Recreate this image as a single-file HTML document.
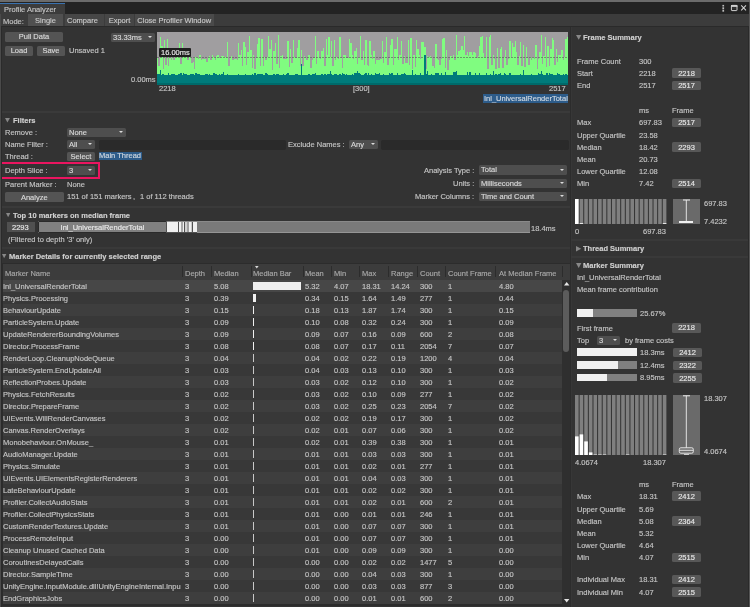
<!DOCTYPE html><html><head><meta charset='utf-8'><style>
*{margin:0;padding:0}
html,body{width:750px;height:607px;overflow:hidden;background:#333333}
body{position:relative;font-family:"Liberation Sans",sans-serif;font-size:7.5px;color:#c4c4c4;-webkit-text-stroke:0.15px currentColor}
.t{position:absolute;white-space:nowrap;line-height:10px;height:10px;will-change:transform}
.b{position:absolute;box-sizing:border-box}
.bold{font-weight:bold;color:#d0d0d0}
.wt{color:#e8e8e8}
.hl{color:#d0d8e0}
.hd{color:#a8a8a8}
.rw{color:#c4c4c4}
.btn,.fb,.tb{background:#545454;border-radius:1.5px;text-align:center;color:#d8d8d8}
.btn span,.fb span,.tb span{position:absolute;left:0;right:0;top:50%;line-height:10px;margin-top:-4.4px;will-change:transform}
.tb span{margin-top:-4px}
.tb.lft span{text-align:left;left:1.5px}
.tb{border-radius:0;background:#464646;color:#c8c8c8}
.tb.sel{background:#505050}
.tb.cl{background:#4a4a4a}
.fb{background:#585858;color:#e6e6e6}
.dd{background:#4e4e4e;border-radius:1.5px;color:#d8d8d8}
.dd span{position:absolute;left:2px;top:50%;line-height:10px;margin-top:-4.6px;will-change:transform}
.dd i{position:absolute;right:2.8px;top:50%;margin-top:-1.2px;width:0;height:0;border-left:2.2px solid transparent;border-right:2.2px solid transparent;border-top:2.8px solid #dcdcdc}
.tf{background:#2a2a2a;border-radius:2px}
.tri{position:absolute;width:0;height:0;border-left:2.5px solid transparent;border-right:2.5px solid transparent;border-top:4.6px solid #888}
.trir{position:absolute;width:0;height:0;border-top:2.5px solid transparent;border-bottom:2.5px solid transparent;border-left:4.6px solid #888}
.sorti{position:absolute;width:0;height:0;border-left:2px solid transparent;border-right:2px solid transparent;border-top:2.6px solid #d0d0d0}
.up{position:absolute;width:0;height:0;border-left:2.8px solid transparent;border-right:2.8px solid transparent;border-bottom:3.4px solid #e0e0e0}
.down{position:absolute;width:0;height:0;border-left:2.8px solid transparent;border-right:2.8px solid transparent;border-top:3.4px solid #e0e0e0}
</style></head><body><div class="b " style="left:0px;top:0px;width:750px;height:2px;background:#6b6b6b"></div>
<div class="b " style="left:0px;top:2px;width:750px;height:12px;background:#232323"></div>
<div class="b " style="left:0px;top:3px;width:65px;height:11px;background:#3c3c3c"></div>
<div class="b " style="left:0px;top:3px;width:65px;height:1px;background:#3a72b0"></div>
<div class="t " style="left:4px;top:5.10px;">Profile Analyzer</div>
<svg class="b" style="left:718px;top:3px" width="32" height="11" viewBox="0 0 32 11"><rect x="4.4" y="1.9" width="1.7" height="1.6" fill="#bdbdbd"/><rect x="4.4" y="4.3" width="1.7" height="2" fill="#bdbdbd"/><rect x="4.4" y="6.9" width="1.7" height="1.8" fill="#bdbdbd"/><rect x="13.4" y="2.4" width="5.6" height="5.2" rx="0.6" fill="#262626" stroke="#d0d0d0" stroke-width="1"/><rect x="13" y="2" width="6.4" height="1.9" fill="#d0d0d0"/><rect x="14.2" y="4.8" width="4" height="0.5" fill="#555"/><path d="M23.2 2.4 L28 7.3 M28 2.4 L23.2 7.3" stroke="#d4d4d4" stroke-width="1.05"/></svg>
<div class="b " style="left:0px;top:14px;width:750px;height:12px;background:#3c3c3c"></div>
<div class="b " style="left:0px;top:26px;width:750px;height:1px;background:#2a2a2a"></div>
<div class="t " style="left:3px;top:16.60px;">Mode:</div>
<div class="b tb sel" style="left:28px;top:14px;width:35px;height:12px;"><span>Single</span></div>
<div class="b tb lft" style="left:65px;top:14px;width:39px;height:12px;"><span>Compare</span></div>
<div class="b tb" style="left:105px;top:14px;width:29px;height:12px;"><span>Export</span></div>
<div class="b tb cl" style="left:135px;top:14px;width:78.5px;height:12px;"><span>Close Profiler Window</span></div>
<div class="b btn" style="left:5px;top:32px;width:58px;height:9.700000000000003px;"><span>Pull Data</span></div>
<div class="b btn" style="left:5px;top:46px;width:28px;height:9.600000000000001px;"><span>Load</span></div>
<div class="b btn" style="left:37px;top:46px;width:28px;height:9.600000000000001px;"><span>Save</span></div>
<div class="t " style="left:69px;top:46.10px;">Unsaved 1</div>
<div class="b dd" style="left:111px;top:33px;width:44px;height:9px;"><span>33.33ms</span><i></i></div>
<svg class="b" style="left:157px;top:32px" width="411.00" height="53.00" viewBox="0 0 411.00 53.00" shape-rendering="crispEdges"><rect width="411.00" height="53.00" fill="#a09ea0"/><path d="M0.00 26.41h1.42V53h-1.42ZM1.37 34.06h1.42V53h-1.42ZM2.74 4.54h1.42V53h-1.42ZM4.11 13.67h1.42V53h-1.42ZM5.48 36.87h1.42V53h-1.42ZM6.85 8.24h1.42V53h-1.42ZM8.22 32.98h1.42V53h-1.42ZM9.59 6.50h1.42V53h-1.42ZM10.96 33.63h1.42V53h-1.42ZM12.33 25.95h1.42V53h-1.42ZM13.70 28.38h1.42V53h-1.42ZM15.07 25.43h1.42V53h-1.42ZM16.44 27.75h1.42V53h-1.42ZM17.81 25.24h1.42V53h-1.42ZM19.18 22.86h1.42V53h-1.42ZM20.55 24.21h1.42V53h-1.42ZM21.92 10.85h1.42V53h-1.42ZM23.29 31.98h1.42V53h-1.42ZM24.66 10.64h1.42V53h-1.42ZM26.03 24.99h1.42V53h-1.42ZM27.40 23.56h1.42V53h-1.42ZM28.77 24.08h1.42V53h-1.42ZM30.14 28.22h1.42V53h-1.42ZM31.51 22.82h1.42V53h-1.42ZM32.88 24.85h1.42V53h-1.42ZM34.25 30.54h1.42V53h-1.42ZM35.62 30.00h1.42V53h-1.42ZM36.99 36.99h1.42V53h-1.42ZM38.36 24.68h1.42V53h-1.42ZM39.73 25.40h1.42V53h-1.42ZM41.10 27.47h1.42V53h-1.42ZM42.47 23.38h1.42V53h-1.42ZM43.84 27.68h1.42V53h-1.42ZM45.21 27.13h1.42V53h-1.42ZM46.58 27.37h1.42V53h-1.42ZM47.95 26.94h1.42V53h-1.42ZM49.32 30.22h1.42V53h-1.42ZM50.69 25.18h1.42V53h-1.42ZM52.06 23.82h1.42V53h-1.42ZM53.43 27.90h1.42V53h-1.42ZM54.80 23.01h1.42V53h-1.42ZM56.17 25.37h1.42V53h-1.42ZM57.54 28.33h1.42V53h-1.42ZM58.91 23.52h1.42V53h-1.42ZM60.28 23.38h1.42V53h-1.42ZM61.65 25.79h1.42V53h-1.42ZM63.02 25.66h1.42V53h-1.42ZM64.39 23.77h1.42V53h-1.42ZM65.76 24.06h1.42V53h-1.42ZM67.13 25.25h1.42V53h-1.42ZM68.50 25.51h1.42V53h-1.42ZM69.87 10.48h1.42V53h-1.42ZM71.24 33.79h1.42V53h-1.42ZM72.61 25.83h1.42V53h-1.42ZM73.98 24.16h1.42V53h-1.42ZM75.35 27.97h1.42V53h-1.42ZM76.72 26.66h1.42V53h-1.42ZM78.09 26.70h1.42V53h-1.42ZM79.46 28.16h1.42V53h-1.42ZM80.83 10.52h1.42V53h-1.42ZM82.20 23.43h1.42V53h-1.42ZM83.57 18.01h1.42V53h-1.42ZM84.94 33.90h1.42V53h-1.42ZM86.31 10.34h1.42V53h-1.42ZM87.68 15.28h1.42V53h-1.42ZM89.05 32.65h1.42V53h-1.42ZM90.42 19.75h1.42V53h-1.42ZM91.79 3.67h1.42V53h-1.42ZM93.16 18.49h1.42V53h-1.42ZM94.53 35.60h1.42V53h-1.42ZM95.90 22.93h1.42V53h-1.42ZM97.27 36.85h1.42V53h-1.42ZM98.64 25.82h1.42V53h-1.42ZM100.01 11.96h1.42V53h-1.42ZM101.38 6.43h1.42V53h-1.42ZM102.75 34.00h1.42V53h-1.42ZM104.12 7.26h1.42V53h-1.42ZM105.49 33.80h1.42V53h-1.42ZM106.86 25.47h1.42V53h-1.42ZM108.23 28.39h1.42V53h-1.42ZM109.60 24.93h1.42V53h-1.42ZM110.97 4.20h1.42V53h-1.42ZM112.34 17.30h1.42V53h-1.42ZM113.71 7.98h1.42V53h-1.42ZM115.08 37.69h1.42V53h-1.42ZM116.45 19.42h1.42V53h-1.42ZM117.82 11.07h1.42V53h-1.42ZM119.19 32.11h1.42V53h-1.42ZM120.56 3.38h1.42V53h-1.42ZM121.93 36.00h1.42V53h-1.42ZM123.30 24.46h1.42V53h-1.42ZM124.67 22.76h1.42V53h-1.42ZM126.04 27.37h1.42V53h-1.42ZM127.41 27.33h1.42V53h-1.42ZM128.78 26.66h1.42V53h-1.42ZM130.15 9.13h1.42V53h-1.42ZM131.52 35.01h1.42V53h-1.42ZM132.89 16.56h1.42V53h-1.42ZM134.26 30.53h1.42V53h-1.42ZM135.63 7.51h1.42V53h-1.42ZM137.00 24.80h1.42V53h-1.42ZM138.37 26.36h1.42V53h-1.42ZM139.74 15.63h1.42V53h-1.42ZM141.11 7.57h1.42V53h-1.42ZM142.48 34.13h1.42V53h-1.42ZM143.85 18.19h1.42V53h-1.42ZM145.22 33.67h1.42V53h-1.42ZM146.59 23.76h1.42V53h-1.42ZM147.96 25.64h1.42V53h-1.42ZM149.33 27.82h1.42V53h-1.42ZM150.70 22.65h1.42V53h-1.42ZM152.07 23.34h1.42V53h-1.42ZM153.44 36.01h1.42V53h-1.42ZM154.81 27.91h1.42V53h-1.42ZM156.18 26.04h1.42V53h-1.42ZM157.55 3.82h1.42V53h-1.42ZM158.92 32.13h1.42V53h-1.42ZM160.29 19.25h1.42V53h-1.42ZM161.66 25.80h1.42V53h-1.42ZM163.03 27.02h1.42V53h-1.42ZM164.40 18.76h1.42V53h-1.42ZM165.77 15.56h1.42V53h-1.42ZM167.14 34.46h1.42V53h-1.42ZM168.51 6.53h1.42V53h-1.42ZM169.88 23.34h1.42V53h-1.42ZM171.25 4.55h1.42V53h-1.42ZM172.62 24.98h1.42V53h-1.42ZM173.99 8.75h1.42V53h-1.42ZM175.36 34.03h1.42V53h-1.42ZM176.73 7.61h1.42V53h-1.42ZM178.10 27.74h1.42V53h-1.42ZM179.47 25.34h1.42V53h-1.42ZM180.84 27.45h1.42V53h-1.42ZM182.21 4.85h1.42V53h-1.42ZM183.58 26.38h1.42V53h-1.42ZM184.95 36.26h1.42V53h-1.42ZM186.32 23.27h1.42V53h-1.42ZM187.69 22.92h1.42V53h-1.42ZM189.06 26.11h1.42V53h-1.42ZM190.43 26.37h1.42V53h-1.42ZM191.80 7.20h1.42V53h-1.42ZM193.17 11.47h1.42V53h-1.42ZM194.54 22.70h1.42V53h-1.42ZM195.91 27.28h1.42V53h-1.42ZM197.28 19.49h1.42V53h-1.42ZM198.65 15.93h1.42V53h-1.42ZM200.02 31.79h1.42V53h-1.42ZM201.39 24.86h1.42V53h-1.42ZM202.76 3.88h1.42V53h-1.42ZM204.13 28.49h1.42V53h-1.42ZM205.50 18.91h1.42V53h-1.42ZM206.87 32.99h1.42V53h-1.42ZM208.24 7.76h1.42V53h-1.42ZM209.61 32.85h1.42V53h-1.42ZM210.98 33.79h1.42V53h-1.42ZM212.35 9.19h1.42V53h-1.42ZM213.72 22.74h1.42V53h-1.42ZM215.09 26.98h1.42V53h-1.42ZM216.46 19.28h1.42V53h-1.42ZM217.83 32.21h1.42V53h-1.42ZM219.20 28.16h1.42V53h-1.42ZM220.57 28.22h1.42V53h-1.42ZM221.94 28.07h1.42V53h-1.42ZM223.31 27.14h1.42V53h-1.42ZM224.68 9.15h1.42V53h-1.42ZM226.05 30.52h1.42V53h-1.42ZM227.42 19.66h1.42V53h-1.42ZM228.79 4.64h1.42V53h-1.42ZM230.16 33.33h1.42V53h-1.42ZM231.53 26.49h1.42V53h-1.42ZM232.90 12.64h1.42V53h-1.42ZM234.27 7.17h1.42V53h-1.42ZM235.64 33.17h1.42V53h-1.42ZM237.01 16.74h1.42V53h-1.42ZM238.38 16.92h1.42V53h-1.42ZM239.75 5.03h1.42V53h-1.42ZM241.12 27.70h1.42V53h-1.42ZM242.49 23.13h1.42V53h-1.42ZM243.86 9.27h1.42V53h-1.42ZM245.23 31.63h1.42V53h-1.42ZM246.60 24.37h1.42V53h-1.42ZM247.97 30.81h1.42V53h-1.42ZM249.34 31.31h1.42V53h-1.42ZM250.71 8.23h1.42V53h-1.42ZM252.08 33.33h1.42V53h-1.42ZM253.45 6.35h1.42V53h-1.42ZM254.82 36.56h1.42V53h-1.42ZM256.19 22.59h1.42V53h-1.42ZM257.56 34.98h1.42V53h-1.42ZM258.93 7.82h1.42V53h-1.42ZM260.30 16.68h1.42V53h-1.42ZM261.67 22.82h1.42V53h-1.42ZM263.04 27.45h1.42V53h-1.42ZM264.41 9.88h1.42V53h-1.42ZM265.78 9.80h1.42V53h-1.42ZM267.15 15.32h1.42V53h-1.42ZM268.52 36.71h1.42V53h-1.42ZM269.89 24.34h1.42V53h-1.42ZM271.26 25.18h1.42V53h-1.42ZM272.63 23.91h1.42V53h-1.42ZM274.00 25.34h1.42V53h-1.42ZM275.37 33.54h1.42V53h-1.42ZM276.74 35.87h1.42V53h-1.42ZM278.11 11.57h1.42V53h-1.42ZM279.48 27.39h1.42V53h-1.42ZM280.85 28.00h1.42V53h-1.42ZM282.22 32.81h1.42V53h-1.42ZM283.59 27.39h1.42V53h-1.42ZM284.96 7.47h1.42V53h-1.42ZM286.33 5.74h1.42V53h-1.42ZM287.70 36.28h1.42V53h-1.42ZM289.07 17.84h1.42V53h-1.42ZM290.44 37.94h1.42V53h-1.42ZM291.81 28.44h1.42V53h-1.42ZM293.18 23.56h1.42V53h-1.42ZM294.55 26.34h1.42V53h-1.42ZM295.92 22.51h1.42V53h-1.42ZM297.29 27.87h1.42V53h-1.42ZM298.66 3.04h1.42V53h-1.42ZM300.03 22.99h1.42V53h-1.42ZM301.40 18.77h1.42V53h-1.42ZM302.77 18.09h1.42V53h-1.42ZM304.14 13.98h1.42V53h-1.42ZM305.51 18.35h1.42V53h-1.42ZM306.88 3.99h1.42V53h-1.42ZM308.25 22.86h1.42V53h-1.42ZM309.62 20.40h1.42V53h-1.42ZM310.99 23.96h1.42V53h-1.42ZM312.36 19.86h1.42V53h-1.42ZM313.73 20.13h1.42V53h-1.42ZM315.10 23.14h1.42V53h-1.42ZM316.47 19.89h1.42V53h-1.42ZM317.84 20.63h1.42V53h-1.42ZM319.21 25.83h1.42V53h-1.42ZM320.58 23.80h1.42V53h-1.42ZM321.95 13.58h1.42V53h-1.42ZM323.32 4.81h1.42V53h-1.42ZM324.69 3.71h1.42V53h-1.42ZM326.06 20.91h1.42V53h-1.42ZM327.43 25.32h1.42V53h-1.42ZM328.80 4.90h1.42V53h-1.42ZM330.17 36.60h1.42V53h-1.42ZM331.54 4.66h1.42V53h-1.42ZM332.91 3.36h1.42V53h-1.42ZM334.28 32.57h1.42V53h-1.42ZM335.65 22.69h1.42V53h-1.42ZM337.02 26.73h1.42V53h-1.42ZM338.39 36.56h1.42V53h-1.42ZM339.76 15.96h1.42V53h-1.42ZM341.13 36.37h1.42V53h-1.42ZM342.50 17.14h1.42V53h-1.42ZM343.87 14.89h1.42V53h-1.42ZM345.24 36.30h1.42V53h-1.42ZM346.61 24.91h1.42V53h-1.42ZM347.98 18.10h1.42V53h-1.42ZM349.35 33.03h1.42V53h-1.42ZM350.72 27.03h1.42V53h-1.42ZM352.09 8.55h1.42V53h-1.42ZM353.46 25.13h1.42V53h-1.42ZM354.83 10.85h1.42V53h-1.42ZM356.20 14.95h1.42V53h-1.42ZM357.57 8.55h1.42V53h-1.42ZM358.94 19.58h1.42V53h-1.42ZM360.31 33.07h1.42V53h-1.42ZM361.68 23.68h1.42V53h-1.42ZM363.05 9.60h1.42V53h-1.42ZM364.42 34.00h1.42V53h-1.42ZM365.79 13.26h1.42V53h-1.42ZM367.16 34.59h1.42V53h-1.42ZM368.53 15.28h1.42V53h-1.42ZM369.90 26.35h1.42V53h-1.42ZM371.27 33.36h1.42V53h-1.42ZM372.64 25.04h1.42V53h-1.42ZM374.01 28.08h1.42V53h-1.42ZM375.38 25.44h1.42V53h-1.42ZM376.75 27.19h1.42V53h-1.42ZM378.12 12.77h1.42V53h-1.42ZM379.49 36.63h1.42V53h-1.42ZM380.86 26.61h1.42V53h-1.42ZM382.23 19.74h1.42V53h-1.42ZM383.60 3.23h1.42V53h-1.42ZM384.97 32.12h1.42V53h-1.42ZM386.34 23.81h1.42V53h-1.42ZM387.71 5.20h1.42V53h-1.42ZM389.08 34.50h1.42V53h-1.42ZM390.45 13.86h1.42V53h-1.42ZM391.82 34.39h1.42V53h-1.42ZM393.19 17.46h1.42V53h-1.42ZM394.56 6.16h1.42V53h-1.42ZM395.93 8.13h1.42V53h-1.42ZM397.30 32.90h1.42V53h-1.42ZM398.67 17.07h1.42V53h-1.42ZM400.04 30.12h1.42V53h-1.42ZM401.41 23.11h1.42V53h-1.42ZM402.78 23.42h1.42V53h-1.42ZM404.15 18.15h1.42V53h-1.42ZM405.52 27.53h1.42V53h-1.42ZM406.89 25.13h1.42V53h-1.42ZM408.26 6.98h1.42V53h-1.42ZM409.63 5.46h1.42V53h-1.42Z" fill="#80fc80"/><line x1="0" y1="25.299999999999997" x2="411.00" y2="25.299999999999997" stroke="#5a5a5a" stroke-width="0.6" stroke-dasharray="2 1"/><path d="M0.00 41.76h1.42V53h-1.42ZM1.37 41.88h1.42V53h-1.42ZM2.74 38.13h1.42V53h-1.42ZM4.11 43.03h1.42V53h-1.42ZM5.48 42.23h1.42V53h-1.42ZM6.85 43.15h1.42V53h-1.42ZM8.22 43.18h1.42V53h-1.42ZM9.59 43.07h1.42V53h-1.42ZM10.96 41.45h1.42V53h-1.42ZM12.33 42.94h1.42V53h-1.42ZM13.70 41.90h1.42V53h-1.42ZM15.07 41.60h1.42V53h-1.42ZM16.44 41.57h1.42V53h-1.42ZM17.81 42.92h1.42V53h-1.42ZM19.18 43.01h1.42V53h-1.42ZM20.55 41.60h1.42V53h-1.42ZM21.92 42.26h1.42V53h-1.42ZM23.29 41.35h1.42V53h-1.42ZM24.66 42.93h1.42V53h-1.42ZM26.03 41.34h1.42V53h-1.42ZM27.40 42.12h1.42V53h-1.42ZM28.77 41.90h1.42V53h-1.42ZM30.14 43.05h1.42V53h-1.42ZM31.51 42.97h1.42V53h-1.42ZM32.88 42.28h1.42V53h-1.42ZM34.25 42.21h1.42V53h-1.42ZM35.62 42.28h1.42V53h-1.42ZM36.99 43.16h1.42V53h-1.42ZM38.36 41.38h1.42V53h-1.42ZM39.73 42.28h1.42V53h-1.42ZM41.10 42.37h1.42V53h-1.42ZM42.47 43.19h1.42V53h-1.42ZM43.84 43.12h1.42V53h-1.42ZM45.21 42.97h1.42V53h-1.42ZM46.58 42.94h1.42V53h-1.42ZM47.95 41.78h1.42V53h-1.42ZM49.32 42.09h1.42V53h-1.42ZM50.69 42.90h1.42V53h-1.42ZM52.06 42.16h1.42V53h-1.42ZM53.43 43.06h1.42V53h-1.42ZM54.80 42.93h1.42V53h-1.42ZM56.17 41.45h1.42V53h-1.42ZM57.54 41.92h1.42V53h-1.42ZM58.91 42.22h1.42V53h-1.42ZM60.28 42.91h1.42V53h-1.42ZM61.65 42.38h1.42V53h-1.42ZM63.02 43.07h1.42V53h-1.42ZM64.39 42.05h1.42V53h-1.42ZM65.76 39.87h1.42V53h-1.42ZM67.13 42.93h1.42V53h-1.42ZM68.50 43.04h1.42V53h-1.42ZM69.87 42.40h1.42V53h-1.42ZM71.24 43.03h1.42V53h-1.42ZM72.61 43.17h1.42V53h-1.42ZM73.98 43.05h1.42V53h-1.42ZM75.35 43.02h1.42V53h-1.42ZM76.72 43.04h1.42V53h-1.42ZM78.09 42.92h1.42V53h-1.42ZM79.46 43.16h1.42V53h-1.42ZM80.83 42.11h1.42V53h-1.42ZM82.20 43.00h1.42V53h-1.42ZM83.57 43.13h1.42V53h-1.42ZM84.94 42.95h1.42V53h-1.42ZM86.31 43.10h1.42V53h-1.42ZM87.68 41.74h1.42V53h-1.42ZM89.05 43.05h1.42V53h-1.42ZM90.42 42.91h1.42V53h-1.42ZM91.79 43.12h1.42V53h-1.42ZM93.16 43.12h1.42V53h-1.42ZM94.53 42.33h1.42V53h-1.42ZM95.90 43.01h1.42V53h-1.42ZM97.27 41.36h1.42V53h-1.42ZM98.64 43.12h1.42V53h-1.42ZM100.01 42.27h1.42V53h-1.42ZM101.38 42.03h1.42V53h-1.42ZM102.75 41.98h1.42V53h-1.42ZM104.12 41.52h1.42V53h-1.42ZM105.49 43.17h1.42V53h-1.42ZM106.86 43.08h1.42V53h-1.42ZM108.23 41.40h1.42V53h-1.42ZM109.60 42.33h1.42V53h-1.42ZM110.97 43.12h1.42V53h-1.42ZM112.34 43.00h1.42V53h-1.42ZM113.71 43.15h1.42V53h-1.42ZM115.08 43.04h1.42V53h-1.42ZM116.45 41.97h1.42V53h-1.42ZM117.82 43.14h1.42V53h-1.42ZM119.19 41.92h1.42V53h-1.42ZM120.56 42.12h1.42V53h-1.42ZM121.93 42.99h1.42V53h-1.42ZM123.30 43.16h1.42V53h-1.42ZM124.67 42.93h1.42V53h-1.42ZM126.04 41.77h1.42V53h-1.42ZM127.41 43.02h1.42V53h-1.42ZM128.78 42.36h1.42V53h-1.42ZM130.15 41.40h1.42V53h-1.42ZM131.52 43.05h1.42V53h-1.42ZM132.89 43.05h1.42V53h-1.42ZM134.26 43.12h1.42V53h-1.42ZM135.63 43.14h1.42V53h-1.42ZM137.00 42.99h1.42V53h-1.42ZM138.37 42.22h1.42V53h-1.42ZM139.74 41.72h1.42V53h-1.42ZM141.11 42.99h1.42V53h-1.42ZM142.48 43.06h1.42V53h-1.42ZM143.85 32.00h1.42V53h-1.42ZM145.22 42.91h1.42V53h-1.42ZM146.59 43.14h1.42V53h-1.42ZM147.96 43.16h1.42V53h-1.42ZM149.33 43.13h1.42V53h-1.42ZM150.70 41.81h1.42V53h-1.42ZM152.07 42.02h1.42V53h-1.42ZM153.44 43.16h1.42V53h-1.42ZM154.81 41.95h1.42V53h-1.42ZM156.18 41.89h1.42V53h-1.42ZM157.55 41.40h1.42V53h-1.42ZM158.92 43.14h1.42V53h-1.42ZM160.29 42.96h1.42V53h-1.42ZM161.66 43.19h1.42V53h-1.42ZM163.03 43.11h1.42V53h-1.42ZM164.40 41.83h1.42V53h-1.42ZM165.77 43.12h1.42V53h-1.42ZM167.14 42.20h1.42V53h-1.42ZM168.51 43.05h1.42V53h-1.42ZM169.88 42.29h1.42V53h-1.42ZM171.25 42.09h1.42V53h-1.42ZM172.62 38.89h1.42V53h-1.42ZM173.99 42.07h1.42V53h-1.42ZM175.36 42.94h1.42V53h-1.42ZM176.73 41.92h1.42V53h-1.42ZM178.10 42.36h1.42V53h-1.42ZM179.47 43.20h1.42V53h-1.42ZM180.84 42.91h1.42V53h-1.42ZM182.21 41.77h1.42V53h-1.42ZM183.58 43.06h1.42V53h-1.42ZM184.95 41.30h1.42V53h-1.42ZM186.32 41.64h1.42V53h-1.42ZM187.69 43.03h1.42V53h-1.42ZM189.06 42.04h1.42V53h-1.42ZM190.43 43.06h1.42V53h-1.42ZM191.80 42.99h1.42V53h-1.42ZM193.17 43.07h1.42V53h-1.42ZM194.54 41.90h1.42V53h-1.42ZM195.91 43.05h1.42V53h-1.42ZM197.28 41.42h1.42V53h-1.42ZM198.65 41.26h1.42V53h-1.42ZM200.02 38.54h1.42V53h-1.42ZM201.39 41.23h1.42V53h-1.42ZM202.76 41.93h1.42V53h-1.42ZM204.13 43.10h1.42V53h-1.42ZM205.50 43.19h1.42V53h-1.42ZM206.87 42.20h1.42V53h-1.42ZM208.24 41.25h1.42V53h-1.42ZM209.61 42.95h1.42V53h-1.42ZM210.98 41.30h1.42V53h-1.42ZM212.35 43.19h1.42V53h-1.42ZM213.72 42.32h1.42V53h-1.42ZM215.09 43.10h1.42V53h-1.42ZM216.46 43.12h1.42V53h-1.42ZM217.83 41.49h1.42V53h-1.42ZM219.20 42.12h1.42V53h-1.42ZM220.57 42.10h1.42V53h-1.42ZM221.94 41.44h1.42V53h-1.42ZM223.31 43.10h1.42V53h-1.42ZM224.68 43.18h1.42V53h-1.42ZM226.05 41.74h1.42V53h-1.42ZM227.42 42.90h1.42V53h-1.42ZM228.79 42.99h1.42V53h-1.42ZM230.16 43.00h1.42V53h-1.42ZM231.53 41.39h1.42V53h-1.42ZM232.90 41.51h1.42V53h-1.42ZM234.27 41.34h1.42V53h-1.42ZM235.64 43.05h1.42V53h-1.42ZM237.01 42.90h1.42V53h-1.42ZM238.38 42.93h1.42V53h-1.42ZM239.75 41.23h1.42V53h-1.42ZM241.12 43.12h1.42V53h-1.42ZM242.49 43.01h1.42V53h-1.42ZM243.86 42.16h1.42V53h-1.42ZM245.23 42.01h1.42V53h-1.42ZM246.60 41.45h1.42V53h-1.42ZM247.97 41.74h1.42V53h-1.42ZM249.34 43.08h1.42V53h-1.42ZM250.71 43.11h1.42V53h-1.42ZM252.08 42.90h1.42V53h-1.42ZM253.45 43.14h1.42V53h-1.42ZM254.82 37.99h1.42V53h-1.42ZM256.19 43.01h1.42V53h-1.42ZM257.56 41.79h1.42V53h-1.42ZM258.93 42.92h1.42V53h-1.42ZM260.30 43.14h1.42V53h-1.42ZM261.67 43.08h1.42V53h-1.42ZM263.04 41.46h1.42V53h-1.42ZM264.41 42.95h1.42V53h-1.42ZM265.78 43.08h1.42V53h-1.42ZM267.15 23.30h1.42V53h-1.42ZM268.52 41.68h1.42V53h-1.42ZM269.89 38.74h1.42V53h-1.42ZM271.26 43.19h1.42V53h-1.42ZM272.63 42.97h1.42V53h-1.42ZM274.00 42.25h1.42V53h-1.42ZM275.37 43.19h1.42V53h-1.42ZM276.74 43.05h1.42V53h-1.42ZM278.11 41.26h1.42V53h-1.42ZM279.48 41.22h1.42V53h-1.42ZM280.85 41.45h1.42V53h-1.42ZM282.22 43.15h1.42V53h-1.42ZM283.59 40.76h1.42V53h-1.42ZM284.96 43.10h1.42V53h-1.42ZM286.33 43.00h1.42V53h-1.42ZM287.70 39.91h1.42V53h-1.42ZM289.07 43.03h1.42V53h-1.42ZM290.44 43.08h1.42V53h-1.42ZM291.81 43.09h1.42V53h-1.42ZM293.18 43.19h1.42V53h-1.42ZM294.55 43.02h1.42V53h-1.42ZM295.92 39.85h1.42V53h-1.42ZM297.29 39.96h1.42V53h-1.42ZM298.66 39.07h1.42V53h-1.42ZM300.03 43.16h1.42V53h-1.42ZM301.40 42.94h1.42V53h-1.42ZM302.77 43.03h1.42V53h-1.42ZM304.14 42.92h1.42V53h-1.42ZM305.51 43.08h1.42V53h-1.42ZM306.88 43.20h1.42V53h-1.42ZM308.25 43.01h1.42V53h-1.42ZM309.62 40.35h1.42V53h-1.42ZM310.99 42.98h1.42V53h-1.42ZM312.36 40.25h1.42V53h-1.42ZM313.73 43.07h1.42V53h-1.42ZM315.10 43.13h1.42V53h-1.42ZM316.47 42.92h1.42V53h-1.42ZM317.84 41.31h1.42V53h-1.42ZM319.21 42.95h1.42V53h-1.42ZM320.58 43.11h1.42V53h-1.42ZM321.95 41.31h1.42V53h-1.42ZM323.32 43.10h1.42V53h-1.42ZM324.69 43.01h1.42V53h-1.42ZM326.06 42.95h1.42V53h-1.42ZM327.43 43.17h1.42V53h-1.42ZM328.80 41.38h1.42V53h-1.42ZM330.17 43.11h1.42V53h-1.42ZM331.54 43.14h1.42V53h-1.42ZM332.91 42.06h1.42V53h-1.42ZM334.28 43.05h1.42V53h-1.42ZM335.65 39.11h1.42V53h-1.42ZM337.02 43.14h1.42V53h-1.42ZM338.39 42.40h1.42V53h-1.42ZM339.76 43.20h1.42V53h-1.42ZM341.13 41.81h1.42V53h-1.42ZM342.50 41.27h1.42V53h-1.42ZM343.87 43.17h1.42V53h-1.42ZM345.24 42.96h1.42V53h-1.42ZM346.61 41.33h1.42V53h-1.42ZM347.98 42.15h1.42V53h-1.42ZM349.35 43.13h1.42V53h-1.42ZM350.72 43.01h1.42V53h-1.42ZM352.09 41.39h1.42V53h-1.42ZM353.46 43.03h1.42V53h-1.42ZM354.83 43.13h1.42V53h-1.42ZM356.20 43.15h1.42V53h-1.42ZM357.57 43.15h1.42V53h-1.42ZM358.94 43.17h1.42V53h-1.42ZM360.31 42.96h1.42V53h-1.42ZM361.68 43.17h1.42V53h-1.42ZM363.05 41.92h1.42V53h-1.42ZM364.42 43.06h1.42V53h-1.42ZM365.79 38.35h1.42V53h-1.42ZM367.16 43.07h1.42V53h-1.42ZM368.53 42.97h1.42V53h-1.42ZM369.90 43.11h1.42V53h-1.42ZM371.27 42.99h1.42V53h-1.42ZM372.64 43.01h1.42V53h-1.42ZM374.01 41.61h1.42V53h-1.42ZM375.38 43.19h1.42V53h-1.42ZM376.75 43.04h1.42V53h-1.42ZM378.12 42.98h1.42V53h-1.42ZM379.49 43.08h1.42V53h-1.42ZM380.86 41.48h1.42V53h-1.42ZM382.23 42.33h1.42V53h-1.42ZM383.60 39.15h1.42V53h-1.42ZM384.97 41.51h1.42V53h-1.42ZM386.34 43.08h1.42V53h-1.42ZM387.71 42.96h1.42V53h-1.42ZM389.08 41.24h1.42V53h-1.42ZM390.45 42.96h1.42V53h-1.42ZM391.82 41.40h1.42V53h-1.42ZM393.19 41.95h1.42V53h-1.42ZM394.56 41.53h1.42V53h-1.42ZM395.93 43.07h1.42V53h-1.42ZM397.30 42.94h1.42V53h-1.42ZM398.67 42.96h1.42V53h-1.42ZM400.04 41.26h1.42V53h-1.42ZM401.41 42.12h1.42V53h-1.42ZM402.78 42.96h1.42V53h-1.42ZM404.15 42.97h1.42V53h-1.42ZM405.52 41.57h1.42V53h-1.42ZM406.89 43.03h1.42V53h-1.42ZM408.26 41.81h1.42V53h-1.42ZM409.63 43.05h1.42V53h-1.42Z" fill="#007b7b"/><rect x="0" y="51" width="411.00" height="2" fill="#006a6a"/></svg>
<div class="b " style="left:159px;top:48px;width:32px;height:9px;background:#1f1f1f;border-radius:1px"></div>
<div class="t wt" style="left:161px;top:48.10px;">16.00ms</div>
<div class="t " style="right:594px;top:74.60px;">0.00ms</div>
<div class="t " style="left:159px;top:84.10px;">2218</div>
<div class="t " style="left:352.5px;top:84.10px;">[300]</div>
<div class="t " style="right:184px;top:84.10px;">2517</div>
<div class="b " style="left:483px;top:94px;width:85.29999999999995px;height:9px;background:#2d5c8a"></div>
<div class="t hl" style="left:483.6px;top:94.10px;">Inl_UniversalRenderTotal</div>
<div class="b " style="left:0px;top:111.2px;width:570px;height:1.7999999999999972px;background:#3a3a3a"></div>
<svg class="b" style="left:5.3px;top:118.1px;overflow:visible" width="4.90" height="4.60"><polygon points="0,0 4.90,0 2.45,4.60" fill="#888"/></svg>
<div class="t bold" style="left:13px;top:116.10px;">Filters</div>
<div class="t " style="left:5px;top:128.10px;">Remove :</div>
<div class="b dd" style="left:67px;top:128px;width:59px;height:9px;"><span>None</span><i></i></div>
<div class="t " style="left:5px;top:140.10px;">Name Filter :</div>
<div class="b dd" style="left:67px;top:140px;width:28px;height:9px;"><span>All</span><i></i></div>
<div class="b tf" style="left:98.5px;top:139.5px;width:187.5px;height:10.0px;"></div>
<div class="t " style="left:288px;top:140.10px;">Exclude Names :</div>
<div class="b dd" style="left:349px;top:140px;width:29px;height:9px;"><span>Any</span><i></i></div>
<div class="b tf" style="left:381px;top:139.5px;width:188px;height:10.0px;"></div>
<div class="t " style="left:5px;top:152.10px;">Thread :</div>
<div class="b btn" style="left:67px;top:152px;width:28px;height:9px;"><span>Select</span></div>
<div class="b " style="left:98.5px;top:151.5px;width:43.0px;height:8.5px;background:#2d5c8a"></div>
<div class="t hl" style="left:99px;top:151.40px;">Main Thread</div>
<div class="b " style="left:0px;top:162.3px;width:100.3px;height:16.69999999999999px;border:2px solid #ea1560;box-sizing:border-box"></div>
<div class="t " style="left:5px;top:166.00px;">Depth Slice :</div>
<div class="b dd" style="left:67px;top:165.7px;width:28px;height:9.300000000000011px;"><span>3</span><i></i></div>
<div class="t " style="left:5px;top:179.60px;">Parent Marker :</div>
<div class="t " style="left:67px;top:179.60px;">None</div>
<div class="b btn" style="left:5px;top:192.3px;width:58.5px;height:9.299999999999983px;"><span>Analyze</span></div>
<div class="t " style="left:67px;top:192.40px;">151 of 151 markers</div>
<div class="t " style="left:133px;top:192.10px;">,</div>
<div class="t " style="left:140px;top:192.40px;">1 of 112 threads</div>
<div class="t " style="right:276px;top:166.00px;">Analysis Type :</div>
<div class="b dd wide" style="left:479px;top:165.3px;width:88px;height:9.399999999999977px;"><span>Total</span><i></i></div>
<div class="t " style="right:276px;top:179.10px;">Units :</div>
<div class="b dd wide" style="left:479px;top:178.5px;width:88px;height:9.400000000000006px;"><span>Milliseconds</span><i></i></div>
<div class="t " style="right:276px;top:192.30px;">Marker Columns :</div>
<div class="b dd wide" style="left:479px;top:191.6px;width:88px;height:9.200000000000017px;"><span>Time and Count</span><i></i></div>
<div class="b " style="left:0px;top:206px;width:570px;height:1.8000000000000114px;background:#3a3a3a"></div>
<svg class="b" style="left:6.3px;top:213.4px;overflow:visible" width="4.30" height="4.20"><polygon points="0,0 4.30,0 2.15,4.20" fill="#888"/></svg>
<div class="t bold" style="left:13px;top:210.80px;">Top 10 markers on median frame</div>
<div class="b " style="left:6.7px;top:222.4px;width:28.500000000000004px;height:9.299999999999983px;background:#505050"></div>
<div class="t wt" style="left:12px;top:222.60px;">2293</div>
<div class="b " style="left:38px;top:221px;width:492.29999999999995px;height:12px;background:#7a7a7a;border-top:1px solid #8a8a8a;border-bottom:1px solid #959595"></div>
<div class="b " style="left:38px;top:221.3px;width:128.5px;height:11.399999999999977px;background:#808080;border:1px solid #2a2a2a;box-sizing:border-box;border-radius:1px"></div>
<div class="t wt" style="left:39px;top:222.60px;width:127px;text-align:center">Inl_UniversalRenderTotal</div>
<div class="b " style="left:166.3px;top:221.5px;width:30.69999999999999px;height:11.0px;background:#505050"></div>
<div class="b " style="left:167.2px;top:221.7px;width:10.800000000000011px;height:10.700000000000017px;background:#f0f0f0"></div>
<div class="b " style="left:179.2px;top:221.7px;width:2.1000000000000227px;height:10.700000000000017px;background:#f0f0f0"></div>
<div class="b " style="left:181.4px;top:221.7px;width:1.5px;height:10.700000000000017px;background:#a8a8a8"></div>
<div class="b " style="left:182.9px;top:221.7px;width:1.1999999999999886px;height:10.700000000000017px;background:#f0f0f0"></div>
<div class="b " style="left:185px;top:221.7px;width:1.5px;height:10.700000000000017px;background:#d0d0d0"></div>
<div class="b " style="left:186.5px;top:221.7px;width:2.8000000000000114px;height:10.700000000000017px;background:#a0a0a0"></div>
<div class="b " style="left:189.3px;top:221.7px;width:1.5px;height:10.700000000000017px;background:#f0f0f0"></div>
<div class="b " style="left:190.8px;top:221.7px;width:1.6999999999999886px;height:10.700000000000017px;background:#c8c8c8"></div>
<div class="b " style="left:192.5px;top:221.7px;width:4.300000000000011px;height:10.700000000000017px;background:#f0f0f0"></div>
<div class="t " style="left:531.3px;top:223.60px;">18.4ms</div>
<div class="t " style="left:8px;top:235.30px;">(Filtered to depth '3' only)</div>
<div class="b " style="left:0px;top:247.4px;width:570px;height:1.799999999999983px;background:#393939"></div>
<svg class="b" style="left:2.3px;top:254.2px;overflow:visible" width="4.30" height="4.20"><polygon points="0,0 4.30,0 2.15,4.20" fill="#888"/></svg>
<div class="t bold" style="left:9px;top:252.00px;">Marker Details for currently selected range</div>
<div class="b " style="left:1.5px;top:263px;width:569.5px;height:343px;background:#2c2c2c"></div>
<div class="b " style="left:2.5px;top:263.6px;width:568.0px;height:16.0px;background:#3c3c3c"></div>
<div class="t hd" style="left:5px;top:269.10px;">Marker Name</div>
<div class="t hd" style="left:185.4px;top:269.10px;">Depth</div>
<div class="t hd" style="left:214.2px;top:269.10px;">Median</div>
<div class="t hd" style="left:253.2px;top:269.10px;">Median Bar</div>
<div class="t hd" style="left:304.8px;top:269.10px;">Mean</div>
<div class="t hd" style="left:334px;top:269.10px;">Min</div>
<div class="t hd" style="left:362.4px;top:269.10px;">Max</div>
<div class="t hd" style="left:391px;top:269.10px;">Range</div>
<div class="t hd" style="left:420px;top:269.10px;">Count</div>
<div class="t hd" style="left:448.2px;top:269.10px;">Count Frame</div>
<div class="t hd" style="left:498.9px;top:269.10px;">At Median Frame</div>
<div class="b " style="left:182.3px;top:266.2px;width:1.0px;height:10.800000000000011px;background:#2c2c2c"></div>
<div class="b " style="left:211px;top:266.2px;width:1px;height:10.800000000000011px;background:#2c2c2c"></div>
<div class="b " style="left:250.5px;top:266.2px;width:1.0px;height:10.800000000000011px;background:#2c2c2c"></div>
<div class="b " style="left:302.5px;top:266.2px;width:1.0px;height:10.800000000000011px;background:#2c2c2c"></div>
<div class="b " style="left:331.4px;top:266.2px;width:1.0px;height:10.800000000000011px;background:#2c2c2c"></div>
<div class="b " style="left:359.3px;top:266.2px;width:1.0px;height:10.800000000000011px;background:#2c2c2c"></div>
<div class="b " style="left:387.5px;top:266.2px;width:1.0px;height:10.800000000000011px;background:#2c2c2c"></div>
<div class="b " style="left:416.5px;top:266.2px;width:1.0px;height:10.800000000000011px;background:#2c2c2c"></div>
<div class="b " style="left:445px;top:266.2px;width:1px;height:10.800000000000011px;background:#2c2c2c"></div>
<div class="b " style="left:494.6px;top:266.2px;width:1.0px;height:10.800000000000011px;background:#2c2c2c"></div>
<div class="b " style="left:561.5px;top:266.2px;width:1.0px;height:10.800000000000011px;background:#2c2c2c"></div>
<svg class="b" style="left:254.6px;top:266.3px;overflow:visible" width="3.60" height="2.40"><polygon points="0,0 3.60,0 1.80,2.40" fill="#d8d8d8"/></svg>
<div class="b " style="left:2.5px;top:280px;width:559.5px;height:12px;background:#474747"></div>
<div class="t rw" style="left:3px;top:281.80px;">Inl_UniversalRenderTotal</div>
<div class="t rw" style="left:185.4px;top:281.80px;">3</div>
<div class="t rw" style="left:214.2px;top:281.80px;">5.08</div>
<div class="b " style="left:252.6px;top:281.8px;width:48.00000000000003px;height:8.599999999999966px;background:#f0f0f0"></div>
<div class="t rw" style="left:304.8px;top:281.80px;">5.32</div>
<div class="t rw" style="left:334px;top:281.80px;">4.07</div>
<div class="t rw" style="left:362.4px;top:281.80px;">18.31</div>
<div class="t rw" style="left:391px;top:281.80px;">14.24</div>
<div class="t rw" style="left:419.8px;top:281.80px;">300</div>
<div class="t rw" style="left:448px;top:281.80px;">1</div>
<div class="t rw" style="left:498.6px;top:281.80px;">4.80</div>
<div class="b " style="left:2.5px;top:292px;width:559.5px;height:12px;background:#383838"></div>
<div class="t rw" style="left:3px;top:293.80px;">Physics.Processing</div>
<div class="t rw" style="left:185.4px;top:293.80px;">3</div>
<div class="t rw" style="left:214.2px;top:293.80px;">0.39</div>
<div class="b " style="left:252.6px;top:293.8px;width:3.6850393700787265px;height:8.599999999999966px;background:#f0f0f0"></div>
<div class="t rw" style="left:304.8px;top:293.80px;">0.34</div>
<div class="t rw" style="left:334px;top:293.80px;">0.15</div>
<div class="t rw" style="left:362.4px;top:293.80px;">1.64</div>
<div class="t rw" style="left:391px;top:293.80px;">1.49</div>
<div class="t rw" style="left:419.8px;top:293.80px;">277</div>
<div class="t rw" style="left:448px;top:293.80px;">1</div>
<div class="t rw" style="left:498.6px;top:293.80px;">0.44</div>
<div class="b " style="left:2.5px;top:304px;width:559.5px;height:12px;background:#3e3e3e"></div>
<div class="t rw" style="left:3px;top:305.80px;">BehaviourUpdate</div>
<div class="t rw" style="left:185.4px;top:305.80px;">3</div>
<div class="t rw" style="left:214.2px;top:305.80px;">0.15</div>
<div class="b " style="left:252.6px;top:305.8px;width:1.4173228346456597px;height:8.599999999999966px;background:#f0f0f0"></div>
<div class="t rw" style="left:304.8px;top:305.80px;">0.18</div>
<div class="t rw" style="left:334px;top:305.80px;">0.13</div>
<div class="t rw" style="left:362.4px;top:305.80px;">1.87</div>
<div class="t rw" style="left:391px;top:305.80px;">1.74</div>
<div class="t rw" style="left:419.8px;top:305.80px;">300</div>
<div class="t rw" style="left:448px;top:305.80px;">1</div>
<div class="t rw" style="left:498.6px;top:305.80px;">0.15</div>
<div class="b " style="left:2.5px;top:316px;width:559.5px;height:12px;background:#383838"></div>
<div class="t rw" style="left:3px;top:317.80px;">ParticleSystem.Update</div>
<div class="t rw" style="left:185.4px;top:317.80px;">3</div>
<div class="t rw" style="left:214.2px;top:317.80px;">0.09</div>
<div class="b " style="left:252.6px;top:317.8px;width:1.5999999999999943px;height:8.599999999999966px;background:#f0f0f0"></div>
<div class="t rw" style="left:304.8px;top:317.80px;">0.10</div>
<div class="t rw" style="left:334px;top:317.80px;">0.08</div>
<div class="t rw" style="left:362.4px;top:317.80px;">0.32</div>
<div class="t rw" style="left:391px;top:317.80px;">0.24</div>
<div class="t rw" style="left:419.8px;top:317.80px;">300</div>
<div class="t rw" style="left:448px;top:317.80px;">1</div>
<div class="t rw" style="left:498.6px;top:317.80px;">0.09</div>
<div class="b " style="left:2.5px;top:328px;width:559.5px;height:12px;background:#3e3e3e"></div>
<div class="t rw" style="left:3px;top:329.80px;">UpdateRendererBoundingVolumes</div>
<div class="t rw" style="left:185.4px;top:329.80px;">3</div>
<div class="t rw" style="left:214.2px;top:329.80px;">0.09</div>
<div class="b " style="left:252.6px;top:329.8px;width:1.5999999999999943px;height:8.599999999999966px;background:#f0f0f0"></div>
<div class="t rw" style="left:304.8px;top:329.80px;">0.09</div>
<div class="t rw" style="left:334px;top:329.80px;">0.07</div>
<div class="t rw" style="left:362.4px;top:329.80px;">0.16</div>
<div class="t rw" style="left:391px;top:329.80px;">0.09</div>
<div class="t rw" style="left:419.8px;top:329.80px;">600</div>
<div class="t rw" style="left:448px;top:329.80px;">2</div>
<div class="t rw" style="left:498.6px;top:329.80px;">0.08</div>
<div class="b " style="left:2.5px;top:340px;width:559.5px;height:12px;background:#383838"></div>
<div class="t rw" style="left:3px;top:341.80px;">Director.ProcessFrame</div>
<div class="t rw" style="left:185.4px;top:341.80px;">3</div>
<div class="t rw" style="left:214.2px;top:341.80px;">0.08</div>
<div class="b " style="left:252.6px;top:341.8px;width:1.5999999999999943px;height:8.599999999999966px;background:#f0f0f0"></div>
<div class="t rw" style="left:304.8px;top:341.80px;">0.08</div>
<div class="t rw" style="left:334px;top:341.80px;">0.07</div>
<div class="t rw" style="left:362.4px;top:341.80px;">0.17</div>
<div class="t rw" style="left:391px;top:341.80px;">0.11</div>
<div class="t rw" style="left:419.8px;top:341.80px;">2054</div>
<div class="t rw" style="left:448px;top:341.80px;">7</div>
<div class="t rw" style="left:498.6px;top:341.80px;">0.07</div>
<div class="b " style="left:2.5px;top:352px;width:559.5px;height:12px;background:#3e3e3e"></div>
<div class="t rw" style="left:3px;top:353.80px;">RenderLoop.CleanupNodeQueue</div>
<div class="t rw" style="left:185.4px;top:353.80px;">3</div>
<div class="t rw" style="left:214.2px;top:353.80px;">0.04</div>
<div class="b " style="left:252.6px;top:353.8px;width:1.0px;height:8.599999999999966px;background:#c8c8c8"></div>
<div class="t rw" style="left:304.8px;top:353.80px;">0.04</div>
<div class="t rw" style="left:334px;top:353.80px;">0.02</div>
<div class="t rw" style="left:362.4px;top:353.80px;">0.22</div>
<div class="t rw" style="left:391px;top:353.80px;">0.19</div>
<div class="t rw" style="left:419.8px;top:353.80px;">1200</div>
<div class="t rw" style="left:448px;top:353.80px;">4</div>
<div class="t rw" style="left:498.6px;top:353.80px;">0.04</div>
<div class="b " style="left:2.5px;top:364px;width:559.5px;height:12px;background:#383838"></div>
<div class="t rw" style="left:3px;top:365.80px;">ParticleSystem.EndUpdateAll</div>
<div class="t rw" style="left:185.4px;top:365.80px;">3</div>
<div class="t rw" style="left:214.2px;top:365.80px;">0.03</div>
<div class="b " style="left:252.6px;top:365.8px;width:1.0px;height:8.599999999999966px;background:#c8c8c8"></div>
<div class="t rw" style="left:304.8px;top:365.80px;">0.04</div>
<div class="t rw" style="left:334px;top:365.80px;">0.03</div>
<div class="t rw" style="left:362.4px;top:365.80px;">0.13</div>
<div class="t rw" style="left:391px;top:365.80px;">0.10</div>
<div class="t rw" style="left:419.8px;top:365.80px;">300</div>
<div class="t rw" style="left:448px;top:365.80px;">1</div>
<div class="t rw" style="left:498.6px;top:365.80px;">0.03</div>
<div class="b " style="left:2.5px;top:376px;width:559.5px;height:12px;background:#3e3e3e"></div>
<div class="t rw" style="left:3px;top:377.80px;">ReflectionProbes.Update</div>
<div class="t rw" style="left:185.4px;top:377.80px;">3</div>
<div class="t rw" style="left:214.2px;top:377.80px;">0.03</div>
<div class="b " style="left:252.6px;top:377.8px;width:1.0px;height:8.599999999999966px;background:#c8c8c8"></div>
<div class="t rw" style="left:304.8px;top:377.80px;">0.03</div>
<div class="t rw" style="left:334px;top:377.80px;">0.02</div>
<div class="t rw" style="left:362.4px;top:377.80px;">0.12</div>
<div class="t rw" style="left:391px;top:377.80px;">0.10</div>
<div class="t rw" style="left:419.8px;top:377.80px;">300</div>
<div class="t rw" style="left:448px;top:377.80px;">1</div>
<div class="t rw" style="left:498.6px;top:377.80px;">0.02</div>
<div class="b " style="left:2.5px;top:388px;width:559.5px;height:12px;background:#383838"></div>
<div class="t rw" style="left:3px;top:389.80px;">Physics.FetchResults</div>
<div class="t rw" style="left:185.4px;top:389.80px;">3</div>
<div class="t rw" style="left:214.2px;top:389.80px;">0.02</div>
<div class="b " style="left:252.6px;top:389.8px;width:1.0px;height:8.599999999999966px;background:#c8c8c8"></div>
<div class="t rw" style="left:304.8px;top:389.80px;">0.03</div>
<div class="t rw" style="left:334px;top:389.80px;">0.02</div>
<div class="t rw" style="left:362.4px;top:389.80px;">0.10</div>
<div class="t rw" style="left:391px;top:389.80px;">0.09</div>
<div class="t rw" style="left:419.8px;top:389.80px;">277</div>
<div class="t rw" style="left:448px;top:389.80px;">1</div>
<div class="t rw" style="left:498.6px;top:389.80px;">0.02</div>
<div class="b " style="left:2.5px;top:400px;width:559.5px;height:12px;background:#3e3e3e"></div>
<div class="t rw" style="left:3px;top:401.80px;">Director.PrepareFrame</div>
<div class="t rw" style="left:185.4px;top:401.80px;">3</div>
<div class="t rw" style="left:214.2px;top:401.80px;">0.02</div>
<div class="b " style="left:252.6px;top:401.8px;width:1.0px;height:8.599999999999966px;background:#c8c8c8"></div>
<div class="t rw" style="left:304.8px;top:401.80px;">0.03</div>
<div class="t rw" style="left:334px;top:401.80px;">0.02</div>
<div class="t rw" style="left:362.4px;top:401.80px;">0.25</div>
<div class="t rw" style="left:391px;top:401.80px;">0.23</div>
<div class="t rw" style="left:419.8px;top:401.80px;">2054</div>
<div class="t rw" style="left:448px;top:401.80px;">7</div>
<div class="t rw" style="left:498.6px;top:401.80px;">0.02</div>
<div class="b " style="left:2.5px;top:412px;width:559.5px;height:12px;background:#383838"></div>
<div class="t rw" style="left:3px;top:413.80px;">UIEvents.WillRenderCanvases</div>
<div class="t rw" style="left:185.4px;top:413.80px;">3</div>
<div class="t rw" style="left:214.2px;top:413.80px;">0.02</div>
<div class="b " style="left:252.6px;top:413.8px;width:1.0px;height:8.599999999999966px;background:#c8c8c8"></div>
<div class="t rw" style="left:304.8px;top:413.80px;">0.02</div>
<div class="t rw" style="left:334px;top:413.80px;">0.02</div>
<div class="t rw" style="left:362.4px;top:413.80px;">0.19</div>
<div class="t rw" style="left:391px;top:413.80px;">0.17</div>
<div class="t rw" style="left:419.8px;top:413.80px;">300</div>
<div class="t rw" style="left:448px;top:413.80px;">1</div>
<div class="t rw" style="left:498.6px;top:413.80px;">0.02</div>
<div class="b " style="left:2.5px;top:424px;width:559.5px;height:12px;background:#3e3e3e"></div>
<div class="t rw" style="left:3px;top:425.80px;">Canvas.RenderOverlays</div>
<div class="t rw" style="left:185.4px;top:425.80px;">3</div>
<div class="t rw" style="left:214.2px;top:425.80px;">0.02</div>
<div class="b " style="left:252.6px;top:425.8px;width:1.0px;height:8.599999999999966px;background:#c8c8c8"></div>
<div class="t rw" style="left:304.8px;top:425.80px;">0.02</div>
<div class="t rw" style="left:334px;top:425.80px;">0.01</div>
<div class="t rw" style="left:362.4px;top:425.80px;">0.07</div>
<div class="t rw" style="left:391px;top:425.80px;">0.06</div>
<div class="t rw" style="left:419.8px;top:425.80px;">300</div>
<div class="t rw" style="left:448px;top:425.80px;">1</div>
<div class="t rw" style="left:498.6px;top:425.80px;">0.02</div>
<div class="b " style="left:2.5px;top:436px;width:559.5px;height:12px;background:#383838"></div>
<div class="t rw" style="left:3px;top:437.80px;">Monobehaviour.OnMouse_</div>
<div class="t rw" style="left:185.4px;top:437.80px;">3</div>
<div class="t rw" style="left:214.2px;top:437.80px;">0.01</div>
<div class="b " style="left:252.6px;top:437.8px;width:1.0px;height:8.599999999999966px;background:#c8c8c8"></div>
<div class="t rw" style="left:304.8px;top:437.80px;">0.02</div>
<div class="t rw" style="left:334px;top:437.80px;">0.01</div>
<div class="t rw" style="left:362.4px;top:437.80px;">0.39</div>
<div class="t rw" style="left:391px;top:437.80px;">0.38</div>
<div class="t rw" style="left:419.8px;top:437.80px;">300</div>
<div class="t rw" style="left:448px;top:437.80px;">1</div>
<div class="t rw" style="left:498.6px;top:437.80px;">0.01</div>
<div class="b " style="left:2.5px;top:448px;width:559.5px;height:12px;background:#3e3e3e"></div>
<div class="t rw" style="left:3px;top:449.80px;">AudioManager.Update</div>
<div class="t rw" style="left:185.4px;top:449.80px;">3</div>
<div class="t rw" style="left:214.2px;top:449.80px;">0.01</div>
<div class="b " style="left:252.6px;top:449.8px;width:1.0px;height:8.599999999999966px;background:#c8c8c8"></div>
<div class="t rw" style="left:304.8px;top:449.80px;">0.01</div>
<div class="t rw" style="left:334px;top:449.80px;">0.01</div>
<div class="t rw" style="left:362.4px;top:449.80px;">0.03</div>
<div class="t rw" style="left:391px;top:449.80px;">0.03</div>
<div class="t rw" style="left:419.8px;top:449.80px;">300</div>
<div class="t rw" style="left:448px;top:449.80px;">1</div>
<div class="t rw" style="left:498.6px;top:449.80px;">0.01</div>
<div class="b " style="left:2.5px;top:460px;width:559.5px;height:12px;background:#383838"></div>
<div class="t rw" style="left:3px;top:461.80px;">Physics.Simulate</div>
<div class="t rw" style="left:185.4px;top:461.80px;">3</div>
<div class="t rw" style="left:214.2px;top:461.80px;">0.01</div>
<div class="b " style="left:252.6px;top:461.8px;width:1.0px;height:8.599999999999966px;background:#c8c8c8"></div>
<div class="t rw" style="left:304.8px;top:461.80px;">0.01</div>
<div class="t rw" style="left:334px;top:461.80px;">0.01</div>
<div class="t rw" style="left:362.4px;top:461.80px;">0.02</div>
<div class="t rw" style="left:391px;top:461.80px;">0.01</div>
<div class="t rw" style="left:419.8px;top:461.80px;">277</div>
<div class="t rw" style="left:448px;top:461.80px;">1</div>
<div class="t rw" style="left:498.6px;top:461.80px;">0.01</div>
<div class="b " style="left:2.5px;top:472px;width:559.5px;height:12px;background:#3e3e3e"></div>
<div class="t rw" style="left:3px;top:473.80px;">UIEvents.UIElementsRegisterRenderers</div>
<div class="t rw" style="left:185.4px;top:473.80px;">3</div>
<div class="t rw" style="left:214.2px;top:473.80px;">0.01</div>
<div class="b " style="left:252.6px;top:473.8px;width:1.0px;height:8.599999999999966px;background:#c8c8c8"></div>
<div class="t rw" style="left:304.8px;top:473.80px;">0.01</div>
<div class="t rw" style="left:334px;top:473.80px;">0.01</div>
<div class="t rw" style="left:362.4px;top:473.80px;">0.04</div>
<div class="t rw" style="left:391px;top:473.80px;">0.03</div>
<div class="t rw" style="left:419.8px;top:473.80px;">300</div>
<div class="t rw" style="left:448px;top:473.80px;">1</div>
<div class="t rw" style="left:498.6px;top:473.80px;">0.01</div>
<div class="b " style="left:2.5px;top:484px;width:559.5px;height:12px;background:#383838"></div>
<div class="t rw" style="left:3px;top:485.80px;">LateBehaviourUpdate</div>
<div class="t rw" style="left:185.4px;top:485.80px;">3</div>
<div class="t rw" style="left:214.2px;top:485.80px;">0.01</div>
<div class="b " style="left:252.6px;top:485.8px;width:1.0px;height:8.599999999999966px;background:#c8c8c8"></div>
<div class="t rw" style="left:304.8px;top:485.80px;">0.01</div>
<div class="t rw" style="left:334px;top:485.80px;">0.01</div>
<div class="t rw" style="left:362.4px;top:485.80px;">0.02</div>
<div class="t rw" style="left:391px;top:485.80px;">0.02</div>
<div class="t rw" style="left:419.8px;top:485.80px;">300</div>
<div class="t rw" style="left:448px;top:485.80px;">1</div>
<div class="t rw" style="left:498.6px;top:485.80px;">0.01</div>
<div class="b " style="left:2.5px;top:496px;width:559.5px;height:12px;background:#3e3e3e"></div>
<div class="t rw" style="left:3px;top:497.80px;">Profiler.CollectAudioStats</div>
<div class="t rw" style="left:185.4px;top:497.80px;">3</div>
<div class="t rw" style="left:214.2px;top:497.80px;">0.01</div>
<div class="b " style="left:252.6px;top:497.8px;width:1.0px;height:8.599999999999966px;background:#c8c8c8"></div>
<div class="t rw" style="left:304.8px;top:497.80px;">0.01</div>
<div class="t rw" style="left:334px;top:497.80px;">0.01</div>
<div class="t rw" style="left:362.4px;top:497.80px;">0.02</div>
<div class="t rw" style="left:391px;top:497.80px;">0.01</div>
<div class="t rw" style="left:419.8px;top:497.80px;">600</div>
<div class="t rw" style="left:448px;top:497.80px;">2</div>
<div class="t rw" style="left:498.6px;top:497.80px;">0.01</div>
<div class="b " style="left:2.5px;top:508px;width:559.5px;height:12px;background:#383838"></div>
<div class="t rw" style="left:3px;top:509.80px;">Profiler.CollectPhysicsStats</div>
<div class="t rw" style="left:185.4px;top:509.80px;">3</div>
<div class="t rw" style="left:214.2px;top:509.80px;">0.01</div>
<div class="b " style="left:252.6px;top:509.8px;width:1.0px;height:8.599999999999966px;background:#c8c8c8"></div>
<div class="t rw" style="left:304.8px;top:509.80px;">0.01</div>
<div class="t rw" style="left:334px;top:509.80px;">0.00</div>
<div class="t rw" style="left:362.4px;top:509.80px;">0.01</div>
<div class="t rw" style="left:391px;top:509.80px;">0.01</div>
<div class="t rw" style="left:419.8px;top:509.80px;">246</div>
<div class="t rw" style="left:448px;top:509.80px;">1</div>
<div class="t rw" style="left:498.6px;top:509.80px;">0.01</div>
<div class="b " style="left:2.5px;top:520px;width:559.5px;height:12px;background:#3e3e3e"></div>
<div class="t rw" style="left:3px;top:521.80px;">CustomRenderTextures.Update</div>
<div class="t rw" style="left:185.4px;top:521.80px;">3</div>
<div class="t rw" style="left:214.2px;top:521.80px;">0.01</div>
<div class="b " style="left:252.6px;top:521.8px;width:1.0px;height:8.600000000000023px;background:#c8c8c8"></div>
<div class="t rw" style="left:304.8px;top:521.80px;">0.01</div>
<div class="t rw" style="left:334px;top:521.80px;">0.00</div>
<div class="t rw" style="left:362.4px;top:521.80px;">0.07</div>
<div class="t rw" style="left:391px;top:521.80px;">0.07</div>
<div class="t rw" style="left:419.8px;top:521.80px;">300</div>
<div class="t rw" style="left:448px;top:521.80px;">1</div>
<div class="t rw" style="left:498.6px;top:521.80px;">0.01</div>
<div class="b " style="left:2.5px;top:532px;width:559.5px;height:12px;background:#383838"></div>
<div class="t rw" style="left:3px;top:533.80px;">ProcessRemoteInput</div>
<div class="t rw" style="left:185.4px;top:533.80px;">3</div>
<div class="t rw" style="left:214.2px;top:533.80px;">0.00</div>
<div class="b " style="left:252.6px;top:533.8px;width:1.0px;height:8.600000000000023px;background:#c8c8c8"></div>
<div class="t rw" style="left:304.8px;top:533.80px;">0.01</div>
<div class="t rw" style="left:334px;top:533.80px;">0.00</div>
<div class="t rw" style="left:362.4px;top:533.80px;">0.07</div>
<div class="t rw" style="left:391px;top:533.80px;">0.07</div>
<div class="t rw" style="left:419.8px;top:533.80px;">300</div>
<div class="t rw" style="left:448px;top:533.80px;">1</div>
<div class="t rw" style="left:498.6px;top:533.80px;">0.01</div>
<div class="b " style="left:2.5px;top:544px;width:559.5px;height:12px;background:#3e3e3e"></div>
<div class="t rw" style="left:3px;top:545.80px;">Cleanup Unused Cached Data</div>
<div class="t rw" style="left:185.4px;top:545.80px;">3</div>
<div class="t rw" style="left:214.2px;top:545.80px;">0.00</div>
<div class="b " style="left:252.6px;top:545.8px;width:1.0px;height:8.600000000000023px;background:#c8c8c8"></div>
<div class="t rw" style="left:304.8px;top:545.80px;">0.01</div>
<div class="t rw" style="left:334px;top:545.80px;">0.00</div>
<div class="t rw" style="left:362.4px;top:545.80px;">0.09</div>
<div class="t rw" style="left:391px;top:545.80px;">0.09</div>
<div class="t rw" style="left:419.8px;top:545.80px;">300</div>
<div class="t rw" style="left:448px;top:545.80px;">1</div>
<div class="t rw" style="left:498.6px;top:545.80px;">0.00</div>
<div class="b " style="left:2.5px;top:556px;width:559.5px;height:12px;background:#383838"></div>
<div class="t rw" style="left:3px;top:557.80px;">CoroutinesDelayedCalls</div>
<div class="t rw" style="left:185.4px;top:557.80px;">3</div>
<div class="t rw" style="left:214.2px;top:557.80px;">0.00</div>
<div class="b " style="left:252.6px;top:557.8px;width:1.0px;height:8.600000000000023px;background:#c8c8c8"></div>
<div class="t rw" style="left:304.8px;top:557.80px;">0.00</div>
<div class="t rw" style="left:334px;top:557.80px;">0.00</div>
<div class="t rw" style="left:362.4px;top:557.80px;">0.02</div>
<div class="t rw" style="left:391px;top:557.80px;">0.02</div>
<div class="t rw" style="left:419.8px;top:557.80px;">1477</div>
<div class="t rw" style="left:448px;top:557.80px;">5</div>
<div class="t rw" style="left:498.6px;top:557.80px;">0.00</div>
<div class="b " style="left:2.5px;top:568px;width:559.5px;height:12px;background:#3e3e3e"></div>
<div class="t rw" style="left:3px;top:569.80px;">Director.SampleTime</div>
<div class="t rw" style="left:185.4px;top:569.80px;">3</div>
<div class="t rw" style="left:214.2px;top:569.80px;">0.00</div>
<div class="b " style="left:252.6px;top:569.8px;width:1.0px;height:8.600000000000023px;background:#c8c8c8"></div>
<div class="t rw" style="left:304.8px;top:569.80px;">0.00</div>
<div class="t rw" style="left:334px;top:569.80px;">0.00</div>
<div class="t rw" style="left:362.4px;top:569.80px;">0.04</div>
<div class="t rw" style="left:391px;top:569.80px;">0.03</div>
<div class="t rw" style="left:419.8px;top:569.80px;">300</div>
<div class="t rw" style="left:448px;top:569.80px;">1</div>
<div class="t rw" style="left:498.6px;top:569.80px;">0.00</div>
<div class="b " style="left:2.5px;top:580px;width:559.5px;height:12px;background:#383838"></div>
<div class="t rw" style="left:3px;top:581.80px;">UnityEngine.InputModule.dll!UnityEngineInternal.Inpu</div>
<div class="t rw" style="left:185.4px;top:581.80px;">3</div>
<div class="t rw" style="left:214.2px;top:581.80px;">0.00</div>
<div class="b " style="left:252.6px;top:581.8px;width:1.0px;height:8.600000000000023px;background:#c8c8c8"></div>
<div class="t rw" style="left:304.8px;top:581.80px;">0.00</div>
<div class="t rw" style="left:334px;top:581.80px;">0.00</div>
<div class="t rw" style="left:362.4px;top:581.80px;">0.03</div>
<div class="t rw" style="left:391px;top:581.80px;">0.03</div>
<div class="t rw" style="left:419.8px;top:581.80px;">877</div>
<div class="t rw" style="left:448px;top:581.80px;">3</div>
<div class="t rw" style="left:498.6px;top:581.80px;">0.00</div>
<div class="b " style="left:2.5px;top:592px;width:559.5px;height:12px;background:#3e3e3e"></div>
<div class="t rw" style="left:3px;top:593.80px;">EndGraphicsJobs</div>
<div class="t rw" style="left:185.4px;top:593.80px;">3</div>
<div class="t rw" style="left:214.2px;top:593.80px;">0.00</div>
<div class="b " style="left:252.6px;top:593.8px;width:1.0px;height:8.600000000000023px;background:#c8c8c8"></div>
<div class="t rw" style="left:304.8px;top:593.80px;">0.00</div>
<div class="t rw" style="left:334px;top:593.80px;">0.00</div>
<div class="t rw" style="left:362.4px;top:593.80px;">0.01</div>
<div class="t rw" style="left:391px;top:593.80px;">0.01</div>
<div class="t rw" style="left:419.8px;top:593.80px;">600</div>
<div class="t rw" style="left:448px;top:593.80px;">2</div>
<div class="t rw" style="left:498.6px;top:593.80px;">0.00</div>
<div class="b " style="left:562px;top:280px;width:8.5px;height:326px;background:#2f2f2f"></div>
<svg class="b" style="left:563.6px;top:282.2px;overflow:visible" width="5.40" height="3.40"><polygon points="0,3.40 5.40,3.40 2.70,0" fill="#e6e6e6"/></svg>
<div class="b " style="left:563.2px;top:289.8px;width:5.599999999999909px;height:62.599999999999966px;background:#5c5c5c;border-radius:3px"></div>
<svg class="b" style="left:563.6px;top:598.8px;overflow:visible" width="5.40" height="3.40"><polygon points="0,0 5.40,0 2.70,3.40" fill="#e6e6e6"/></svg>
<div class="b " style="left:569.8px;top:27px;width:1.0px;height:580px;background:#2c2c2c"></div>
<div class="b " style="left:570.8px;top:27px;width:1.7000000000000455px;height:580px;background:#373737"></div>
<svg class="b" style="left:575.9px;top:35.1px;overflow:visible" width="5.40" height="4.70"><polygon points="0,0 5.40,0 2.70,4.70" fill="#888"/></svg>
<div class="t bold" style="left:583px;top:33.10px;">Frame Summary</div>
<div class="t " style="left:577px;top:56.60px;">Frame Count</div>
<div class="t " style="left:639px;top:56.60px;">300</div>
<div class="t " style="left:577px;top:68.80px;">Start</div>
<div class="t " style="left:639px;top:68.80px;">2218</div>
<div class="b fb" style="left:672px;top:68.3px;width:29px;height:9.700000000000003px;"><span>2218</span></div>
<div class="t " style="left:577px;top:81.30px;">End</div>
<div class="t " style="left:639px;top:81.30px;">2517</div>
<div class="b fb" style="left:672px;top:80.8px;width:29px;height:9.700000000000003px;"><span>2517</span></div>
<div class="t " style="left:639px;top:106.20px;">ms</div>
<div class="t " style="left:672px;top:106.20px;">Frame</div>
<div class="t " style="left:577px;top:117.90px;">Max</div>
<div class="t " style="left:639px;top:117.90px;">697.83</div>
<div class="b fb" style="left:672px;top:117.5px;width:29px;height:9.599999999999994px;"><span>2517</span></div>
<div class="t " style="left:577px;top:130.60px;">Upper Quartile</div>
<div class="t " style="left:639px;top:130.60px;">23.58</div>
<div class="t " style="left:577px;top:142.50px;">Median</div>
<div class="t " style="left:639px;top:142.50px;">18.42</div>
<div class="b fb" style="left:672px;top:142.1px;width:29px;height:9.600000000000023px;"><span>2293</span></div>
<div class="t " style="left:577px;top:155.40px;">Mean</div>
<div class="t " style="left:639px;top:155.40px;">20.73</div>
<div class="t " style="left:577px;top:167.30px;">Lower Quartile</div>
<div class="t " style="left:639px;top:167.30px;">12.08</div>
<div class="t " style="left:577px;top:179.20px;">Min</div>
<div class="t " style="left:639px;top:179.20px;">7.42</div>
<div class="b fb" style="left:672px;top:178.79999999999998px;width:29px;height:9.600000000000023px;"><span>2514</span></div>
<svg class="b" style="left:575px;top:199px" width="93" height="25" viewBox="0 0 93 25"><rect x="0.00" y="0" width="3.6" height="25" fill="#7f7f7f"/><rect x="0.00" y="0.00" width="3.6" height="25.00" fill="#ffffff"/><rect x="4.62" y="0" width="3.6" height="25" fill="#7f7f7f"/><rect x="4.62" y="24.20" width="3.6" height="0.80" fill="#ffffff"/><rect x="9.24" y="0" width="3.6" height="25" fill="#7f7f7f"/><rect x="13.86" y="0" width="3.6" height="25" fill="#7f7f7f"/><rect x="18.48" y="0" width="3.6" height="25" fill="#7f7f7f"/><rect x="23.10" y="0" width="3.6" height="25" fill="#7f7f7f"/><rect x="27.72" y="0" width="3.6" height="25" fill="#7f7f7f"/><rect x="32.34" y="0" width="3.6" height="25" fill="#7f7f7f"/><rect x="36.96" y="0" width="3.6" height="25" fill="#7f7f7f"/><rect x="41.58" y="0" width="3.6" height="25" fill="#7f7f7f"/><rect x="46.20" y="0" width="3.6" height="25" fill="#7f7f7f"/><rect x="50.82" y="0" width="3.6" height="25" fill="#7f7f7f"/><rect x="55.44" y="0" width="3.6" height="25" fill="#7f7f7f"/><rect x="60.06" y="0" width="3.6" height="25" fill="#7f7f7f"/><rect x="64.68" y="0" width="3.6" height="25" fill="#7f7f7f"/><rect x="69.30" y="0" width="3.6" height="25" fill="#7f7f7f"/><rect x="73.92" y="0" width="3.6" height="25" fill="#7f7f7f"/><rect x="78.54" y="0" width="3.6" height="25" fill="#7f7f7f"/><rect x="83.16" y="0" width="3.6" height="25" fill="#7f7f7f"/><rect x="87.78" y="0" width="3.6" height="25" fill="#7f7f7f"/><rect x="87.78" y="24.20" width="3.6" height="0.80" fill="#ffffff"/></svg><svg class="b" style="left:673px;top:199px" width="27" height="25" viewBox="0 0 27 25"><rect width="27" height="25" fill="#6a6a6a"/><line x1="13.3" y1="1" x2="13.3" y2="23" stroke="#f0f0f0" stroke-width="0.9"/><line x1="10" y1="1" x2="17" y2="1" stroke="#f0f0f0" stroke-width="1"/><rect x="6" y="22" width="14" height="2" fill="#f0f0f0"/></svg>
<div class="t " style="left:703.6px;top:199.20px;">697.83</div>
<div class="t " style="left:703.6px;top:216.60px;">7.4232</div>
<div class="t " style="left:575px;top:226.60px;">0</div>
<div class="t " style="right:84.5px;top:226.60px;">697.83</div>
<div class="b " style="left:571.3px;top:239.2px;width:176.30000000000007px;height:2.200000000000017px;background:#393939"></div>
<svg class="b" style="left:576px;top:245.6px;overflow:visible" width="5.20" height="5.60"><polygon points="0,0 5.20,2.80 0,5.60" fill="#888"/></svg>
<div class="t bold" style="left:583px;top:244.10px;">Thread Summary</div>
<div class="b " style="left:571.3px;top:255.6px;width:176.30000000000007px;height:2.200000000000017px;background:#393939"></div>
<svg class="b" style="left:575.8px;top:263px;overflow:visible" width="5.40" height="5.00"><polygon points="0,0 5.40,0 2.70,5.00" fill="#888"/></svg>
<div class="t bold" style="left:583px;top:261.10px;">Marker Summary</div>
<div class="t " style="left:577px;top:273.20px;">Inl_UniversalRenderTotal</div>
<div class="t " style="left:577px;top:285.40px;">Mean frame contribution</div>
<div class="b " style="left:577px;top:309px;width:60px;height:8px;background:#808080"></div>
<div class="b " style="left:577px;top:309px;width:16px;height:8px;background:#f0f0f0"></div>
<div class="t " style="left:640.3px;top:308.60px;">25.67%</div>
<div class="t " style="left:577px;top:323.60px;">First frame</div>
<div class="b fb" style="left:672px;top:323.2px;width:29px;height:9.400000000000034px;"><span>2218</span></div>
<div class="t " style="left:577px;top:336.30px;">Top</div>
<div class="b dd sm" style="left:597px;top:336px;width:22.5px;height:9.300000000000011px;"><span>3</span><i></i></div>
<div class="t " style="left:624.6px;top:336.30px;">by frame costs</div>
<div class="b " style="left:577px;top:348.3px;width:60px;height:7.699999999999989px;background:#808080"></div>
<div class="b " style="left:577px;top:348.3px;width:60px;height:7.699999999999989px;background:#f0f0f0"></div>
<div class="t " style="left:640.3px;top:347.90px;">18.3ms</div>
<div class="b fb" style="left:673px;top:347.8px;width:29px;height:9.699999999999989px;"><span>2412</span></div>
<div class="b " style="left:577px;top:361px;width:60px;height:7.699999999999989px;background:#808080"></div>
<div class="b " style="left:577px;top:361px;width:40.799999999999955px;height:7.699999999999989px;background:#f0f0f0"></div>
<div class="t " style="left:640.3px;top:360.60px;">12.4ms</div>
<div class="b fb" style="left:673px;top:360.5px;width:29px;height:9.699999999999989px;"><span>2322</span></div>
<div class="b " style="left:577px;top:373.7px;width:60px;height:7.699999999999989px;background:#808080"></div>
<div class="b " style="left:577px;top:373.7px;width:29.899999999999977px;height:7.699999999999989px;background:#f0f0f0"></div>
<div class="t " style="left:640.3px;top:373.30px;">8.95ms</div>
<div class="b fb" style="left:673px;top:373.2px;width:29px;height:9.699999999999989px;"><span>2255</span></div>
<svg class="b" style="left:575px;top:394.6px" width="93" height="60.39999999999998" viewBox="0 0 93 60.39999999999998"><rect x="0.00" y="0" width="3.6" height="60.39999999999998" fill="#7f7f7f"/><rect x="0.00" y="41.40" width="3.6" height="19.00" fill="#ffffff"/><rect x="4.62" y="0" width="3.6" height="60.39999999999998" fill="#7f7f7f"/><rect x="4.62" y="39.40" width="3.6" height="21.00" fill="#ffffff"/><rect x="9.24" y="0" width="3.6" height="60.39999999999998" fill="#7f7f7f"/><rect x="9.24" y="46.40" width="3.6" height="14.00" fill="#ffffff"/><rect x="13.86" y="0" width="3.6" height="60.39999999999998" fill="#7f7f7f"/><rect x="13.86" y="57.40" width="3.6" height="3.00" fill="#ffffff"/><rect x="18.48" y="0" width="3.6" height="60.39999999999998" fill="#7f7f7f"/><rect x="18.48" y="59.60" width="3.6" height="0.80" fill="#ffffff"/><rect x="23.10" y="0" width="3.6" height="60.39999999999998" fill="#7f7f7f"/><rect x="23.10" y="59.60" width="3.6" height="0.80" fill="#ffffff"/><rect x="27.72" y="0" width="3.6" height="60.39999999999998" fill="#7f7f7f"/><rect x="27.72" y="59.60" width="3.6" height="0.80" fill="#ffffff"/><rect x="32.34" y="0" width="3.6" height="60.39999999999998" fill="#7f7f7f"/><rect x="36.96" y="0" width="3.6" height="60.39999999999998" fill="#7f7f7f"/><rect x="41.58" y="0" width="3.6" height="60.39999999999998" fill="#7f7f7f"/><rect x="46.20" y="0" width="3.6" height="60.39999999999998" fill="#7f7f7f"/><rect x="50.82" y="0" width="3.6" height="60.39999999999998" fill="#7f7f7f"/><rect x="50.82" y="59.60" width="3.6" height="0.80" fill="#ffffff"/><rect x="55.44" y="0" width="3.6" height="60.39999999999998" fill="#7f7f7f"/><rect x="60.06" y="0" width="3.6" height="60.39999999999998" fill="#7f7f7f"/><rect x="64.68" y="0" width="3.6" height="60.39999999999998" fill="#7f7f7f"/><rect x="69.30" y="0" width="3.6" height="60.39999999999998" fill="#7f7f7f"/><rect x="73.92" y="0" width="3.6" height="60.39999999999998" fill="#7f7f7f"/><rect x="78.54" y="0" width="3.6" height="60.39999999999998" fill="#7f7f7f"/><rect x="83.16" y="0" width="3.6" height="60.39999999999998" fill="#7f7f7f"/><rect x="87.78" y="0" width="3.6" height="60.39999999999998" fill="#7f7f7f"/><rect x="87.78" y="59.60" width="3.6" height="0.80" fill="#ffffff"/></svg><svg class="b" style="left:673px;top:394.6px" width="27" height="60.4" viewBox="0 0 27 60.4"><rect width="27" height="60.4" fill="#6a6a6a"/><line x1="13.3" y1="0.8" x2="13.3" y2="53" stroke="#f0f0f0" stroke-width="0.9"/><line x1="10" y1="0.8" x2="17" y2="0.8" stroke="#f0f0f0" stroke-width="1"/><rect x="6.3" y="52.8" width="14" height="5.4" rx="1.5" fill="#6a6a6a" stroke="#f0f0f0" stroke-width="0.9"/><line x1="6.5" y1="55.3" x2="20" y2="55.3" stroke="#f0f0f0" stroke-width="0.9"/><line x1="11" y1="59.6" x2="16" y2="59.6" stroke="#f0f0f0" stroke-width="0.8"/></svg>
<div class="t " style="left:703.6px;top:394.20px;">18.307</div>
<div class="t " style="left:703.6px;top:446.60px;">4.0674</div>
<div class="t " style="left:575px;top:457.60px;">4.0674</div>
<div class="t " style="right:84.5px;top:457.60px;">18.307</div>
<div class="t " style="left:639px;top:480.00px;">ms</div>
<div class="t " style="left:672px;top:480.00px;">Frame</div>
<div class="t " style="left:577px;top:491.70px;">Max</div>
<div class="t " style="left:639px;top:491.70px;">18.31</div>
<div class="b fb" style="left:672px;top:491.3px;width:29px;height:9.600000000000023px;"><span>2412</span></div>
<div class="t " style="left:577px;top:504.60px;">Upper Quartile</div>
<div class="t " style="left:639px;top:504.60px;">5.69</div>
<div class="t " style="left:577px;top:516.50px;">Median</div>
<div class="t " style="left:639px;top:516.50px;">5.08</div>
<div class="b fb" style="left:672px;top:516.1px;width:29px;height:9.599999999999909px;"><span>2364</span></div>
<div class="t " style="left:577px;top:529.20px;">Mean</div>
<div class="t " style="left:639px;top:529.20px;">5.32</div>
<div class="t " style="left:577px;top:541.10px;">Lower Quartile</div>
<div class="t " style="left:639px;top:541.10px;">4.64</div>
<div class="t " style="left:577px;top:553.30px;">Min</div>
<div class="t " style="left:639px;top:553.30px;">4.07</div>
<div class="b fb" style="left:672px;top:552.9000000000001px;width:29px;height:9.599999999999909px;"><span>2515</span></div>
<div class="t " style="left:577px;top:575.10px;">Individual Max</div>
<div class="t " style="left:639px;top:575.10px;">18.31</div>
<div class="b fb" style="left:672px;top:574.7px;width:29px;height:9.599999999999909px;"><span>2412</span></div>
<div class="t " style="left:577px;top:587.70px;">Individual Min</div>
<div class="t " style="left:639px;top:587.70px;">4.07</div>
<div class="b fb" style="left:672px;top:587.3000000000001px;width:29px;height:9.599999999999909px;"><span>2515</span></div>
<div class="b " style="left:747.6px;top:27px;width:1.3999999999999773px;height:580px;background:#2a2a2a"></div>
<div class="b " style="left:749px;top:2px;width:1px;height:605px;background:#555"></div>
<div class="b " style="left:0px;top:14px;width:1px;height:593px;background:#4a4a4a"></div>
<div class="b " style="left:1px;top:27px;width:1px;height:580px;background:#2b2b2b"></div></body></html>
